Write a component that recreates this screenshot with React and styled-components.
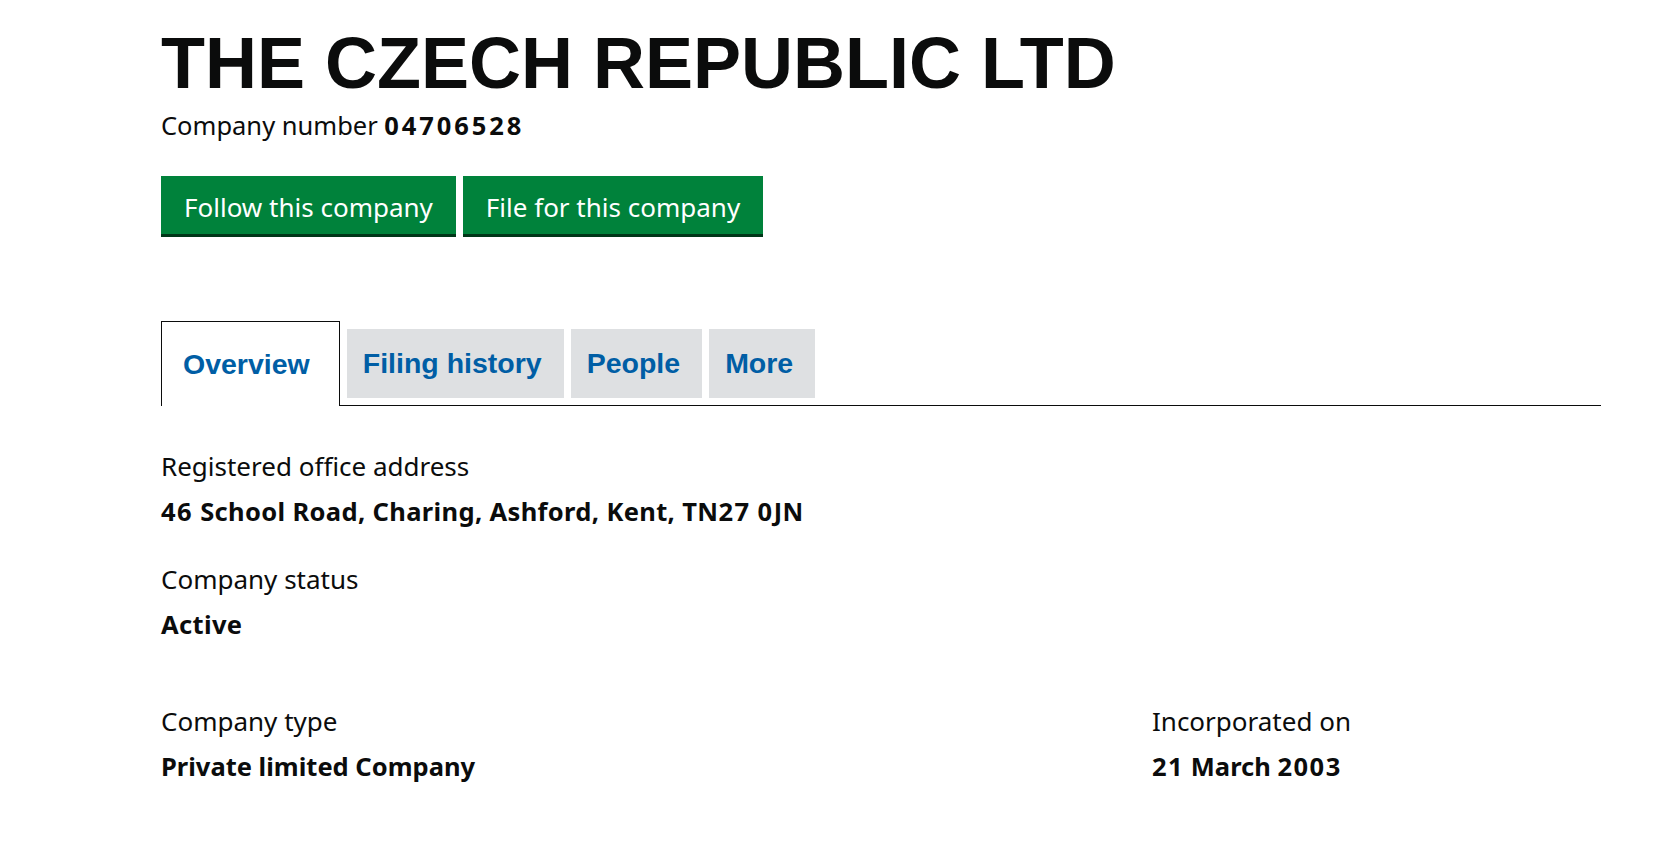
import React from "react";
import styled, { createGlobalStyle } from "styled-components";

const Global = createGlobalStyle`
  html, body { margin: 0; padding: 0; background: #ffffff; }
  body { color: #0b0c0c; font-family: "Noto Sans", "Liberation Sans", sans-serif; }
  * { box-sizing: border-box; }
`;

const Page = styled.main`
  width: 1601px;
  padding: 27px 0 40px 161px;
`;

const Title = styled.h1`
  margin: 0;
  font-family: "Liberation Sans", Arial, sans-serif;
  font-weight: 700;
  font-size: 72px;
  line-height: 72px;
  color: #0b0c0c;
`;

const CompanyNumber = styled.p`
  margin: 11px 0 0;
  font-size: 25.5px;
  line-height: 30px;
`;

const Number = styled.strong`
  font-weight: 700;
  letter-spacing: 2.9px;
`;

const Actions = styled.div`
  display: flex;
  gap: 7px;
  margin-top: 36px;
`;

const Button = styled.a`
  display: inline-block;
  height: 58px;
  padding: 4px 23px 0;
  line-height: 54px;
  font-size: 26px;
  color: #ffffff;
  background: #00823b;
  box-shadow: 0 3px 0 #003618;
  text-decoration: none;
  cursor: pointer;
`;

const TabList = styled.ul`
  display: flex;
  align-items: flex-end;
  list-style: none;
  margin: 87px 0 0;
  padding: 0;
  width: 1440px;
  border-bottom: 1px solid #0b0c0c;
`;

const Tab = styled.li`
  margin-right: 7px;
  font-family: "Liberation Sans", Arial, sans-serif;
  font-weight: 700;
  font-size: 28.5px;
  line-height: 69px;
  background: ${(p) => (p.$selected ? "#ffffff" : "#dee0e2")};
  padding: ${(p) => (p.$selected ? "8px 29px 7px 21px" : "0 22px 0 16px")};
  margin-bottom: ${(p) => (p.$selected ? "-1px" : "7px")};
  border: ${(p) => (p.$selected ? "1px solid #0b0c0c" : "none")};
  border-bottom: none;
`;

const TabLink = styled.a`
  color: #005ea5;
  text-decoration: none;
`;

const Detail = styled.dl`
  margin: ${(p) => p.$top}px 0 0;
`;

const Label = styled.dt`
  font-size: 26px;
  line-height: 30px;
`;

const Value = styled.dd`
  margin: 15px 0 0;
  font-size: 25.5px;
  line-height: 30px;
  font-weight: 700;
  letter-spacing: ${(p) => (p.$wide ? "0.35px" : "0")};
`;

const Digits = styled.span`
  letter-spacing: 1.5px;
`;

const Row = styled.div`
  display: grid;
  grid-template-columns: 991px 1fr;
  margin-top: 67px;
`;

const tabs = ["Overview", "Filing history", "People", "More"];

export default function App() {
  return (
    <>
      <Global />
      <Page>
        <Title>THE CZECH REPUBLIC LTD</Title>
        <CompanyNumber>
          Company number <Number>04706528</Number>
        </CompanyNumber>
        <Actions>
          <Button>Follow this company</Button>
          <Button>File for this company</Button>
        </Actions>
        <TabList>
          {tabs.map((t, i) => (
            <Tab key={t} $selected={i === 0}>
              <TabLink>{t}</TabLink>
            </Tab>
          ))}
        </TabList>
        <Detail $top={45}>
          <Label>Registered office address</Label>
          <Value $wide>
            <Digits>46</Digits> School Road, Charing, Ashford, Kent, TN<Digits>27</Digits> <Digits>0</Digits>JN
          </Value>
        </Detail>
        <Detail $top={38}>
          <Label>Company status</Label>
          <Value $wide>Active</Value>
        </Detail>
        <Row>
          <Detail $top={0}>
            <Label>Company type</Label>
            <Value>Private limited Company</Value>
          </Detail>
          <Detail $top={0}>
            <Label>Incorporated on</Label>
            <Value>
              <Digits>21</Digits> March <Digits>2003</Digits>
            </Value>
          </Detail>
        </Row>
      </Page>
    </>
  );
}
